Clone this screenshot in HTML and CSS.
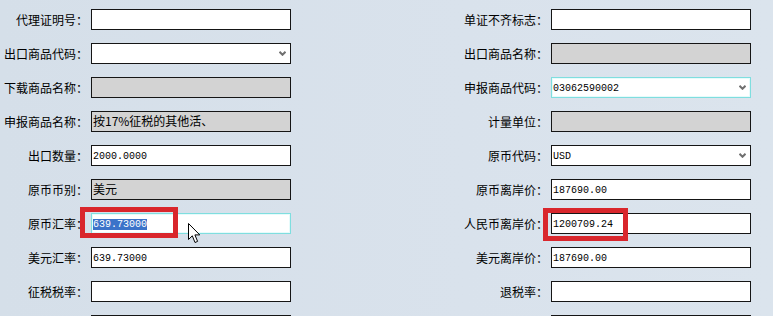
FILE: index.html
```html
<!DOCTYPE html>
<html lang="zh-CN">
<head>
  <meta charset="UTF-8">
  <title>出口商品录入</title>
  <link rel="stylesheet" href="styles.css">
</head>
<body>
  <div class="form">
    <label class="lbl">代理证明号：</label>
    <div class="field"></div>
    <label class="lbl right">单证不齐标志：</label>
    <div class="field"></div>

    <label class="lbl">出口商品代码：</label>
    <div class="field select"><svg class="arrow" width="7" height="5" viewBox="0 0 7 5"><path d="M0.5 0.8 L3.5 3.8 L6.5 0.8" fill="none" stroke="#707070" stroke-width="2"/></svg></div>
    <label class="lbl right">出口商品名称：</label>
    <div class="field ro"></div>

    <label class="lbl">下载商品名称：</label>
    <div class="field ro"></div>
    <label class="lbl right">申报商品代码：</label>
    <div class="field select focus"><span class="num">03062590002</span><svg class="arrow" width="7" height="5" viewBox="0 0 7 5"><path d="M0.5 0.8 L3.5 3.8 L6.5 0.8" fill="none" stroke="#707070" stroke-width="2"/></svg></div>

    <label class="lbl">申报商品名称：</label>
    <div class="field ro"><span class="txt">按17%征税的其他活、</span></div>
    <label class="lbl right">计量单位：</label>
    <div class="field ro"></div>

    <label class="lbl">出口数量：</label>
    <div class="field"><span class="num">2000.0000</span></div>
    <label class="lbl right">原币代码：</label>
    <div class="field select"><span class="num">USD</span><svg class="arrow" width="7" height="5" viewBox="0 0 7 5"><path d="M0.5 0.8 L3.5 3.8 L6.5 0.8" fill="none" stroke="#707070" stroke-width="2"/></svg></div>

    <label class="lbl">原币币别：</label>
    <div class="field ro"><span class="txt">美元</span></div>
    <label class="lbl right">原币离岸价：</label>
    <div class="field"><span class="num">187690.00</span></div>

    <label class="lbl">原币汇率：</label>
    <div class="field focus">
      <span class="num sel">639.73000</span>
      <span class="mark mark-left"></span>
      <svg class="pointer" width="13" height="21" viewBox="0 0 13 21"><path d="M0.5 0.5 L0.5 16.5 L4.3 12.8 L7 19.5 L9.6 18.4 L6.9 11.9 L11.8 11.9 Z" fill="#fff" stroke="#000" stroke-width="1"/></svg>
    </div>
    <label class="lbl right">人民币离岸价：</label>
    <div class="field">
      <span class="num">1200709.24</span>
      <span class="mark mark-right"></span>
    </div>

    <label class="lbl">美元汇率：</label>
    <div class="field"><span class="num">639.73000</span></div>
    <label class="lbl right">美元离岸价：</label>
    <div class="field"><span class="num">187690.00</span></div>

    <label class="lbl">征税税率：</label>
    <div class="field"></div>
    <label class="lbl right">退税率：</label>
    <div class="field"></div>

    <label class="lbl"></label>
    <div class="field"></div>
    <label class="lbl right"></label>
    <div class="field"></div>
  </div>
</body>
</html>
```

FILE: styles.css
```css
html, body {
  margin: 0;
  height: 100%;
}
body {
  background: linear-gradient(90deg, #d5dfe9 0%, #d9e2ec 60%, #dbe4ed 100%);
  font-family: "Noto Sans CJK SC", "DejaVu Sans", sans-serif;
  font-size: 12px;
  color: #000;
  overflow: hidden;
}
.form {
  display: grid;
  grid-template-columns: 88px 200px 163px 88px 200px;
  grid-auto-rows: 21px;
  column-gap: 3px;
  row-gap: 13px;
  padding-top: 9px;
}
.lbl {
  grid-column: 1;
  text-align: right;
  line-height: 21px;
  white-space: nowrap;
}
.lbl.right {
  grid-column: 4;
}
.field {
  position: relative;
  box-sizing: border-box;
  height: 21px;
  border: 1px solid #151515;
  background: #fff;
  padding: 0 1px;
  line-height: 15px;
}
.field.ro {
  background: #d3d3d3;
}
.field.focus {
  border-color: #7fdedf;
  box-shadow: inset 0 0 0 1px #e6fbfb;
}
.num {
  font-family: "Liberation Mono", monospace;
  font-size: 10px;
}
.txt {
  font-size: 12px;
  line-height: 18px;
}
.sel {
  background: #3b73c9;
  color: #fff;
}
.arrow {
  position: absolute;
  right: 4px;
  top: 7px;
}
.mark {
  position: absolute;
  box-sizing: border-box;
  border: 5px solid #d9262c;
}
.mark-left {
  left: -12px;
  top: -7px;
  width: 98px;
  height: 31px;
}
.mark-right {
  left: -9px;
  top: -6px;
  width: 85px;
  height: 33px;
}
.pointer {
  position: absolute;
  left: 96px;
  top: 9px;
}
```
